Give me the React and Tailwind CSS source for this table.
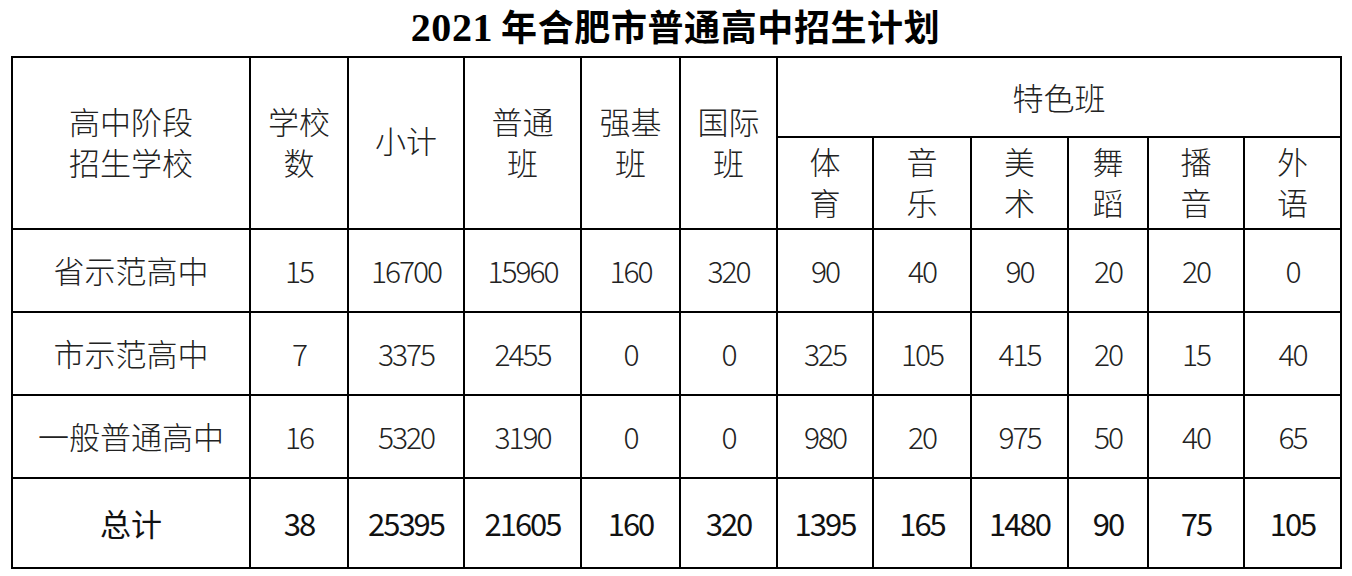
import React from 'react';

const cjk = { fontFamily: '"Noto Sans CJK SC", "Noto Sans", sans-serif' };

const colWidths = [238, 98, 116, 117, 99, 97, 96, 98, 97, 80, 96, 97];

const specials = [
  ['体', '育'],
  ['音', '乐'],
  ['美', '术'],
  ['舞', '蹈'],
  ['播', '音'],
  ['外', '语'],
];

const rows = [
  { name: '省示范高中', values: ['15', '16700', '15960', '160', '320', '90', '40', '90', '20', '20', '0'] },
  { name: '市示范高中', values: ['7', '3375', '2455', '0', '0', '325', '105', '415', '20', '15', '40'] },
  { name: '一般普通高中', values: ['16', '5320', '3190', '0', '0', '980', '20', '975', '50', '40', '65'] },
];

const total = { name: '总计', values: ['38', '25395', '21605', '160', '320', '1395', '165', '1480', '90', '75', '105'] };

const cell = 'border-2 border-black text-center align-middle p-0';

const TwoLines = ({ a, b }) => (
  <div className="flex flex-col items-center leading-[41px] -mt-[4px]">
    <span>{a}</span>
    <span>{b}</span>
  </div>
);

export default function App() {
  return (
    <div className="w-[1352px] h-[576px] bg-white overflow-hidden pl-[11px]" style={cjk}>
      {/* Title */}
      <div className="w-[1329px] h-[56px] flex items-center justify-center">
        <h1 className="text-[36px] font-bold text-black tracking-[0.6px] whitespace-nowrap">
          <span className="text-[40px]" style={{ fontFamily: '"Liberation Serif", serif' }}>2021</span>
          <span className="ml-[8px]">年合肥市普通高中招生计划</span>
        </h1>
      </div>

      {/* Table */}
      <table className="border-collapse table-fixed w-[1329px] text-[#222] text-[31px] font-light">
        <colgroup>
          {colWidths.map((w, i) => (
            <col key={i} style={{ width: w }} />
          ))}
        </colgroup>
        <thead>
          <tr className="h-[80px]">
            <th rowSpan={2} className={`${cell} font-light`}>
              <TwoLines a="高中阶段" b="招生学校" />
            </th>
            <th rowSpan={2} className={`${cell} font-light`}>
              <TwoLines a="学校" b="数" />
            </th>
            <th rowSpan={2} className={`${cell} font-light`}>
              <span className="relative -top-[3px]">小计</span>
            </th>
            <th rowSpan={2} className={`${cell} font-light`}>
              <TwoLines a="普通" b="班" />
            </th>
            <th rowSpan={2} className={`${cell} font-light`}>
              <TwoLines a="强基" b="班" />
            </th>
            <th rowSpan={2} className={`${cell} font-light`}>
              <TwoLines a="国际" b="班" />
            </th>
            <th colSpan={6} className={`${cell} font-light`}>特色班</th>
          </tr>
          <tr className="h-[92px]">
            {specials.map(([a, b]) => (
              <th key={a + b} className={`${cell} font-light`}>
                <TwoLines a={a} b={b} />
              </th>
            ))}
          </tr>
        </thead>
        <tbody>
          {rows.map((row) => (
            <tr key={row.name} className="h-[83px]">
              <td className={cell}>{row.name}</td>
              {row.values.map((v, i) => (
                <td key={i} className={`${cell} tracking-[-2px] text-[30px]`}>
                  {v}
                </td>
              ))}
            </tr>
          ))}
          <tr className="h-[90px] font-normal text-[#111]">
            <td className={cell}>{total.name}</td>
            {total.values.map((v, i) => (
              <td key={i} className={`${cell} tracking-[-2px] text-[31px]`}>
                {v}
              </td>
            ))}
          </tr>
        </tbody>
      </table>
    </div>
  );
}
